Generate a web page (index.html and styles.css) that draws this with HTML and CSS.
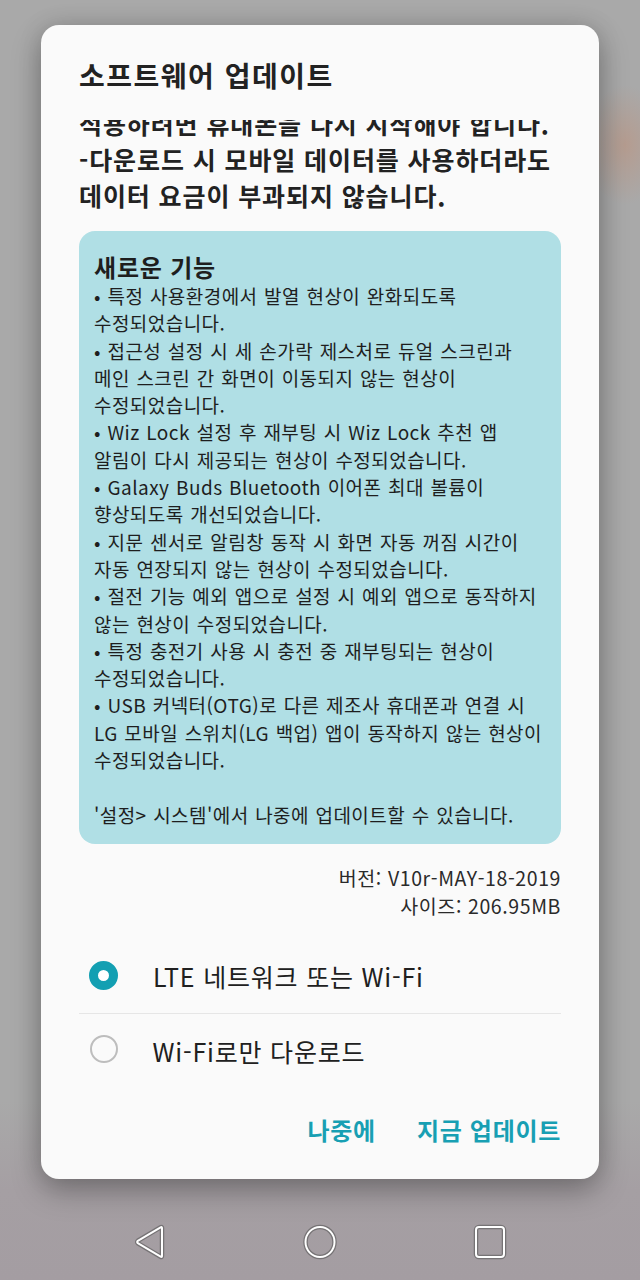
FILE: index.html
```html
<!DOCTYPE html>
<html lang="ko">
<head>
<meta charset="utf-8">
<title>소프트웨어 업데이트</title>
<link rel="stylesheet" href="styles.css">
</head>
<body>
<div class="screen">
  <div class="dialog">
    <h1 class="title">소프트웨어 업데이트</h1>
    <div class="scroll">
      <div class="content">
        <p class="notice">
          <span class="line">적용하려면 휴대폰을 다시 시작해야 합니다.</span>
          <span class="line">-다운로드 시 모바일 데이터를 사용하더라도</span>
          <span class="line">데이터 요금이 부과되지 않습니다.</span>
        </p>
        <div class="features">
          <h2 class="features-title">새로운 기능</h2>
          <div class="features-body">
            <span class="line">• 특정 사용환경에서 발열 현상이 완화되도록</span>
            <span class="line">수정되었습니다.</span>
            <span class="line">• 접근성 설정 시 세 손가락 제스처로 듀얼 스크린과</span>
            <span class="line">메인 스크린 간 화면이 이동되지 않는 현상이</span>
            <span class="line">수정되었습니다.</span>
            <span class="line">• Wiz Lock 설정 후 재부팅 시 Wiz Lock 추천 앱</span>
            <span class="line">알림이 다시 제공되는 현상이 수정되었습니다.</span>
            <span class="line">• Galaxy Buds Bluetooth 이어폰 최대 볼륨이</span>
            <span class="line">향상되도록 개선되었습니다.</span>
            <span class="line">• 지문 센서로 알림창 동작 시 화면 자동 꺼짐 시간이</span>
            <span class="line">자동 연장되지 않는 현상이 수정되었습니다.</span>
            <span class="line">• 절전 기능 예외 앱으로 설정 시 예외 앱으로 동작하지</span>
            <span class="line">않는 현상이 수정되었습니다.</span>
            <span class="line">• 특정 충전기 사용 시 충전 중 재부팅되는 현상이</span>
            <span class="line">수정되었습니다.</span>
            <span class="line">• USB 커넥터(OTG)로 다른 제조사 휴대폰과 연결 시</span>
            <span class="line">LG 모바일 스위치(LG 백업) 앱이 동작하지 않는 현상이</span>
            <span class="line">수정되었습니다.</span>
            <span class="line blank">&nbsp;</span>
            <span class="line">'설정&gt; 시스템'에서 나중에 업데이트할 수 있습니다.</span>
          </div>
        </div>
        <div class="meta">
          <span class="line">버전: V10r-MAY-18-2019</span>
          <span class="line">사이즈: 206.95MB</span>
        </div>
        <div class="options">
          <label class="option">
            <span class="radio radio-on"></span>
            <span class="option-label">LTE 네트워크 또는 Wi-Fi</span>
          </label>
          <div class="divider"></div>
          <label class="option">
            <span class="radio radio-off"></span>
            <span class="option-label">Wi-Fi로만 다운로드</span>
          </label>
        </div>
      </div>
    </div>
    <div class="actions">
      <button class="action">나중에</button>
      <button class="action">지금 업데이트</button>
    </div>
  </div>
  <nav class="navbar">
    <svg class="nav-icon" width="40" height="40" viewBox="0 0 40 40">
      <path class="nav-shadow" d="M32 6 L32 34 Q32 35.5 30.6 34.7 L7.8 21.2 Q6.5 20 7.8 18.8 L30.6 5.3 Q32 4.5 32 6 Z"/>
      <path class="nav-line" d="M32 6 L32 34 Q32 35.5 30.6 34.7 L7.8 21.2 Q6.5 20 7.8 18.8 L30.6 5.3 Q32 4.5 32 6 Z"/>
    </svg>
    <svg class="nav-icon" width="40" height="40" viewBox="0 0 40 40">
      <ellipse class="nav-shadow" cx="20" cy="20" rx="14.5" ry="15"/>
      <ellipse class="nav-line" cx="20" cy="20" rx="14.5" ry="15"/>
    </svg>
    <svg class="nav-icon" width="40" height="40" viewBox="0 0 40 40">
      <rect class="nav-shadow" x="6" y="5" width="28" height="30" rx="3"/>
      <rect class="nav-line" x="6" y="5" width="28" height="30" rx="3"/>
    </svg>
  </nav>
</div>
</body>
</html>
```
FILE: styles.css
```css
* {
  box-sizing: border-box;
}

html, body {
  margin: 0;
  padding: 0;
}

body {
  width: 640px;
  height: 1280px;
  overflow: hidden;
  font-family: "Noto Sans CJK KR", "Noto Sans", sans-serif;
  color: #222222;
}

.screen {
  position: relative;
  width: 640px;
  height: 1280px;
  display: flex;
  flex-direction: column;
  background:
    radial-gradient(ellipse 40px 60px at 625px 145px, rgba(196, 140, 112, 0.45), rgba(196, 140, 112, 0) 100%),
    linear-gradient(180deg, #a9a9a9 0%, #a9a9a9 86%, #a59fa3 93%, #a49da2 100%);
}

.dialog {
  margin: 25px 41px 0;
  width: 558px;
  background: #fafafa;
  border-radius: 18px;
  padding: 32px 38px 25px;
  box-shadow: 0 12px 30px rgba(0, 0, 0, 0.28), 0 0 24px rgba(0, 0, 0, 0.12);
  display: flex;
  flex-direction: column;
}

.title {
  margin: 0;
  font-size: 28px;
  line-height: 36px;
  font-weight: 700;
  color: #222222;
  letter-spacing: 1.5px;
}

.scroll {
  margin-top: 27px;
  overflow: hidden;
}

.content {
  margin-top: -15px;
}

.line {
  display: block;
  white-space: nowrap;
}

.notice {
  margin: 0;
  font-size: 25px;
  line-height: 36px;
  font-weight: 700;
  color: #222222;
  letter-spacing: 0.9px;
}

.features {
  margin-top: 18px;
  background: #b0dfe5;
  border-radius: 16px;
  padding: 21px 10px 16px 15px;
}

.features-title {
  margin: 0;
  font-size: 24px;
  line-height: 30px;
  font-weight: 700;
  color: #1e1e1e;
  letter-spacing: 0.8px;
}

.features-body {
  font-size: 19px;
  line-height: 27.3px;
  color: #1e1e1e;
  letter-spacing: 0.45px;
  word-spacing: 0.8px;
}

.meta {
  margin-top: 20px;
  text-align: right;
  font-size: 19.5px;
  line-height: 28px;
  color: #2a2a2a;
  letter-spacing: 0.6px;
}

.options {
  margin-top: 19px;
  display: flex;
  flex-direction: column;
}

.option {
  height: 74px;
  display: flex;
  align-items: center;
  padding-left: 10px;
}

.option + .divider + .option {
  height: 75px;
}

.radio {
  width: 29px;
  height: 29px;
  border-radius: 50%;
  flex: none;
}

.radio-on {
  border: 9.5px solid #139fb2;
  background: #ffffff;
}

.radio-off {
  border: 2px solid #bdbdbd;
  width: 28px;
  height: 28px;
  margin-left: 0.5px;
  margin-top: -4px;
}

.option-label {
  margin-left: 35px;
  font-size: 25px;
  line-height: 32px;
  color: #202020;
  letter-spacing: 0.8px;
}

.divider {
  height: 1px;
  background: #e6e6e6;
}

.actions {
  margin-top: 17px;
  display: flex;
  justify-content: flex-end;
  gap: 41px;
}

.action {
  border: none;
  background: none;
  padding: 0;
  margin: 0;
  height: 48px;
  font-family: "Noto Sans CJK KR", "Noto Sans", sans-serif;
  font-size: 24px;
  font-weight: 700;
  color: #189fb3;
  letter-spacing: 0.7px;
}

.navbar {
  flex: 1;
  display: flex;
  justify-content: center;
  align-items: center;
  gap: 130px;
  padding-top: 26px;
}

.nav-icon {
  display: block;
}

.nav-shadow {
  fill: none;
  stroke: rgba(80, 80, 80, 0.55);
  stroke-width: 4.5;
  stroke-linejoin: round;
}

.nav-line {
  fill: none;
  stroke: #ffffff;
  stroke-width: 2;
  stroke-linejoin: round;
}
```
